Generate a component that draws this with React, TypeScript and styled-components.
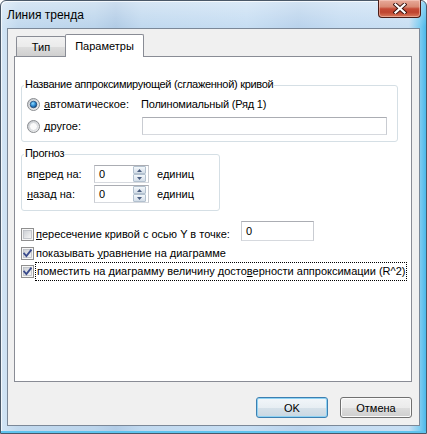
import React from 'react';
import styled, { createGlobalStyle } from 'styled-components';

const Global = createGlobalStyle`
  html, body { margin: 0; padding: 0; background: #ffffff; }
  body { font-family: "Liberation Sans", Arial, sans-serif; font-size: 11px; color: #000; }
  * { box-sizing: border-box; }
`;

const Window = styled.div`
  width: 427px;
  height: 434px;
  display: flex;
  flex-direction: column;
  border: 1px solid #4a5868;
  border-radius: 6px 6px 0 0;
  padding: 0 6px 7px 6px;
  background:
    linear-gradient(180deg, rgba(255,255,255,0.35) 0px, rgba(255,255,255,0) 26px),
    linear-gradient(90deg, #d3e5f5 0%, #c2d9ee 4%, #bcd5ec 22%, #b2cce6 27%, #c1d9ef 33%, #c7def3 58%, #bad3ec 70%, #c5dcf2 80%, #c9dff3 96%, #7fcdf1 98.5%, #4bb8ea 100%);
  box-shadow: inset 0 -2px 0 #5ec3ee, inset 1px 1px 0 rgba(255,255,255,0.7);
`;

const TitleBar = styled.div`
  height: 27px;
  display: flex;
  align-items: flex-start;
  justify-content: space-between;
`;

const Title = styled.div`
  margin-top: 7px;
  font-size: 12px;
  line-height: 14px;
  color: #000;
`;

const CloseButton = styled.div`
  width: 43px;
  height: 18px;
  margin-top: -1px;
  margin-right: -1px;
  border: 1px solid #4b1c16;
  border-top: none;
  border-radius: 0 0 4px 4px;
  background: linear-gradient(180deg, #e8ab9b 0%, #d98a74 40%, #c54b36 52%, #bf442f 72%, #d97a5c 100%);
  box-shadow: inset 0 0 0 1px rgba(255, 220, 210, 0.45);
  display: flex;
  align-items: center;
  justify-content: center;
`;

const Client = styled.div`
  flex: 1;
  display: flex;
  flex-direction: column;
  border: 1px solid #7b8898;
  background: #f0f0f0;
  padding: 5px 0 7px 6px;
`;

const TabStrip = styled.div`
  height: 22px;
  display: flex;
  align-items: flex-end;
  padding-left: 2px;
  position: relative;
  z-index: 1;
`;

const Tab = styled.div<{ $active?: boolean }>`
  height: ${p => (p.$active ? 23 : 20)}px;
  width: ${p => (p.$active ? 79 : 50)}px;
  margin-bottom: ${p => (p.$active ? -1 : 0)}px;
  border: 1px solid #898c95;
  border-bottom: none;
  margin-left: ${p => (p.$active ? -1 : 0)}px;
  border-radius: 2px 2px 0 0;
  background: ${p => (p.$active ? '#ffffff' : 'linear-gradient(180deg, #f2f2f2 0%, #ebebeb 50%, #dddddd 51%, #cfcfcf 100%)')};
  display: flex;
  align-items: center;
  justify-content: center;
  padding-bottom: ${p => (p.$active ? 1 : 0)}px;
  font-size: 11px;
`;

const Panel = styled.div`
  width: 398px;
  height: 326px;
  border: 1px solid #898c95;
  background: #ffffff;
  display: flex;
  flex-direction: column;
  align-items: flex-start;
  padding: 0 0 0 6px;
`;

const GroupBox = styled.div<{ $w: number; $top: number }>`
  position: relative;
  width: ${p => p.$w}px;
  margin-top: ${p => p.$top}px;
  border: 1px solid #d5dfe5;
  border-radius: 3px;
`;

const Caption = styled.span`
  position: absolute;
  top: -8px;
  left: 2px;
  padding: 0 1px;
  line-height: 13px;
  letter-spacing: -0.3px;
  background: #ffffff;
`;

const NameGroup = styled(GroupBox)`
  padding: 7px 0 4px 5px;
`;

const ForecastGroup = styled(GroupBox)`
  padding: 10px 0 7px 5px;
  display: flex;
  flex-direction: column;
  gap: 2px;
`;

const RadioRow = styled.div`
  height: 22px;
  display: grid;
  grid-template-columns: 115px 1fr;
  align-items: center;
`;

const RadioLabel = styled.label`
  display: flex;
  align-items: center;
  gap: 4px;
`;

const Value = styled.span`
  margin-left: -1px;
  letter-spacing: -0.2px;
`;

const TextBox = styled.div<{ $w: number; $h: number }>`
  width: ${p => p.$w}px;
  height: ${p => p.$h}px;
  border: 1px solid #abadb3;
  border-left-color: #c9ccd2;
  border-right-color: #c9ccd2;
  border-bottom-color: #d6d9de;
  background: #ffffff;
  display: flex;
  align-items: center;
  padding-left: 4px;
`;

const SpinRow = styled.div`
  height: 18px;
  display: flex;
  align-items: center;
`;

const SpinLabel = styled.span`
  width: 67px;
`;

const SpinBox = styled.div`
  width: 55px;
  height: 18px;
  border: 1px solid #abadb3;
  border-left-color: #c9ccd2;
  border-right-color: #c9ccd2;
  border-bottom-color: #d6d9de;
  background: #ffffff;
  display: flex;
  align-items: center;
  justify-content: space-between;
  padding: 0 2px 0 4px;
`;

const SpinButtons = styled.div`
  display: flex;
  flex-direction: column;
`;

const SpinButton = styled.div`
  width: 13px;
  height: 8px;
  border: 1px solid #b3c1cf;
  border-radius: 1px;
  background: linear-gradient(180deg, #f4f8fb 0%, #e3eaf1 50%, #d3dde8 100%);
  display: flex;
  align-items: center;
  justify-content: center;
`;

const Units = styled.span`
  margin-left: 8px;
`;

const CheckRow = styled.div<{ $top: number; $h: number; $align?: string }>`
  margin-top: ${p => p.$top}px;
  height: ${p => p.$h}px;
  display: flex;
  align-items: ${p => p.$align || 'center'};
`;

const CheckLabel = styled.span<{ $w?: number; $focus?: boolean }>`
  margin-left: ${p => (p.$focus ? 1 : 2)}px;
  ${p => (p.$w ? `width: ${p.$w}px;` : '')}
  line-height: 13px;
  padding: ${p => (p.$focus ? '2px 1px' : '0')};
  border: ${p => (p.$focus ? '1px dotted #000' : 'none')};
  white-space: nowrap;
`;

const ButtonRow = styled.div`
  margin-top: 15px;
  display: flex;
  justify-content: flex-end;
  gap: 12px;
  padding-right: 7px;
`;

const Button = styled.div<{ $default?: boolean }>`
  width: 72px;
  height: 21px;
  border: 1px solid ${p => (p.$default ? '#3c7fb1' : '#707070')};
  border-radius: 3px;
  background: ${p =>
    p.$default
      ? 'linear-gradient(180deg, #f2f6f9 0%, #e7eef3 50%, #d6e1e9 51%, #c9d7e2 100%)'
      : 'linear-gradient(180deg, #f2f2f2 0%, #ebebeb 50%, #dddddd 51%, #cfcfcf 100%)'};
  box-shadow: inset 0 0 0 1px ${p => (p.$default ? '#8fd2f3' : '#fbfbfb')};
  display: flex;
  align-items: center;
  justify-content: center;
  font-size: 11px;
`;

const U = styled.span`
  text-decoration: underline;
  text-underline-offset: 1px;
`;

const Radio = ({ checked }: { checked?: boolean }) => (
  <svg width="13" height="13" viewBox="0 0 13 13">
    <defs>
      <linearGradient id="radioRing" x1="0" y1="0" x2="1" y2="1">
        <stop offset="0" stopColor="#bfc3c8" />
        <stop offset="1" stopColor="#f7f7f7" />
      </linearGradient>
      <radialGradient id="radioDot" cx="0.4" cy="0.35" r="0.7">
        <stop offset="0" stopColor="#8fdcff" />
        <stop offset="0.55" stopColor="#2a86d0" />
        <stop offset="1" stopColor="#123f70" />
      </radialGradient>
    </defs>
    <circle cx="6.5" cy="6.5" r="6" fill="url(#radioRing)" stroke="#8a8d91" />
    <circle cx="6.5" cy="6.5" r="4" fill="#fafafa" stroke="#d0d3d7" strokeWidth="0.8" />
    {checked && <circle cx="6.5" cy="6.5" r="3.3" fill="url(#radioDot)" stroke="#17406b" strokeWidth="0.7" />}
  </svg>
);

const Check = ({ checked }: { checked?: boolean }) => (
  <svg width="13" height="13" viewBox="0 0 13 13">
    <defs>
      <linearGradient id="chkIn" x1="0" y1="0" x2="1" y2="1">
        <stop offset="0" stopColor="#cbced3" />
        <stop offset="1" stopColor="#f7f7f7" />
      </linearGradient>
    </defs>
    <rect x="0.5" y="0.5" width="12" height="12" fill="#f6f6f6" stroke="#8f8f8f" />
    <rect x="2.5" y="2.5" width="8" height="8" fill="url(#chkIn)" stroke="#b8bcc2" strokeWidth="0.8" />
    {checked && (
      <path d="M3.2 6.6 L5.4 9.1 L9.9 3.3" fill="none" stroke="#3a4b8c" strokeWidth="1.8" strokeLinecap="square" />
    )}
  </svg>
);

const Arrow = ({ up }: { up?: boolean }) => (
  <svg width="5" height="3" viewBox="0 0 5 3">
    <path d={up ? 'M0 3 L2.5 0 L5 3 Z' : 'M0 0 L5 0 L2.5 3 Z'} fill="#4a5e80" />
  </svg>
);

const CloseX = () => (
  <svg width="14" height="11" viewBox="0 0 14 11">
    <path d="M2.5 1.5 L11.5 9.5 M11.5 1.5 L2.5 9.5" stroke="#3a1410" strokeWidth="4" strokeLinecap="square" />
    <path d="M2.5 1.5 L11.5 9.5 M11.5 1.5 L2.5 9.5" stroke="#ffffff" strokeWidth="2.2" strokeLinecap="square" />
  </svg>
);

const Spin = ({ value }: { value: string }) => (
  <SpinBox>
    <span>{value}</span>
    <SpinButtons>
      <SpinButton><Arrow up /></SpinButton>
      <SpinButton><Arrow /></SpinButton>
    </SpinButtons>
  </SpinBox>
);

export default function App() {
  return (
    <>
      <Global />
      <Window>
        <TitleBar>
          <Title>Линия тренда</Title>
          <CloseButton><CloseX /></CloseButton>
        </TitleBar>
        <Client>
          <TabStrip>
            <Tab>Тип</Tab>
            <Tab $active>Параметры</Tab>
          </TabStrip>
          <Panel>
            <NameGroup $w={377} $top={28}>
              <Caption>Название аппроксимирующей (сглаженной) кривой</Caption>
              <RadioRow>
                <RadioLabel><Radio checked /><span><U>а</U>втоматическое:</span></RadioLabel>
                <Value>Полиномиальный (Ряд 1)</Value>
              </RadioRow>
              <RadioRow>
                <RadioLabel><Radio /><span><U>д</U>ругое:</span></RadioLabel>
                <TextBox $w={245} $h={18} />
              </RadioRow>
            </NameGroup>
            <ForecastGroup $w={199} $top={12}>
              <Caption>Прогноз</Caption>
              <SpinRow>
                <SpinLabel>вп<U>е</U>ред на:</SpinLabel>
                <Spin value="0" />
                <Units>единиц</Units>
              </SpinRow>
              <SpinRow>
                <SpinLabel><U>н</U>азад на:</SpinLabel>
                <Spin value="0" />
                <Units>единиц</Units>
              </SpinRow>
            </ForecastGroup>
            <CheckRow $top={10} $h={20} $align="flex-end">
              <Check />
              <CheckLabel $w={205}><U>п</U>ересечение кривой с осью Y в точке:</CheckLabel>
              <TextBox $w={73} $h={20}>0</TextBox>
            </CheckRow>
            <CheckRow $top={3} $h={18}>
              <Check checked />
              <CheckLabel>показывать <U>у</U>равнение на диаграмме</CheckLabel>
            </CheckRow>
            <CheckRow $top={0} $h={18}>
              <Check checked />
              <CheckLabel $focus>поместить на диаграмму величину досто<U>в</U>ерности аппроксимации (R^2)</CheckLabel>
            </CheckRow>
          </Panel>
          <ButtonRow>
            <Button $default>OK</Button>
            <Button>Отмена</Button>
          </ButtonRow>
        </Client>
      </Window>
    </>
  );
}
